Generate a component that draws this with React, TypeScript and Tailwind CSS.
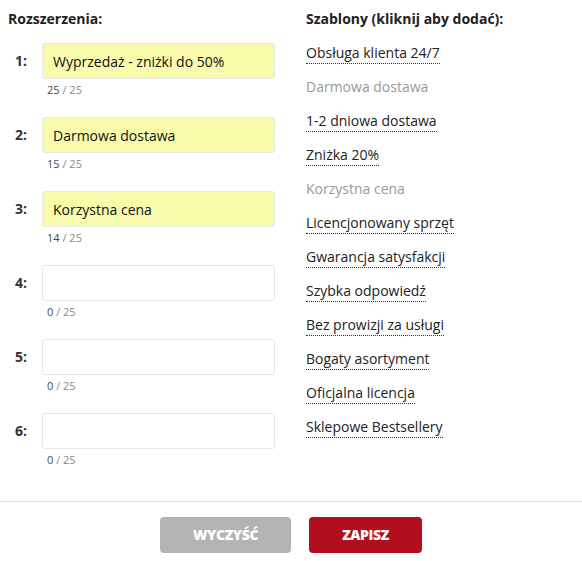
import { useState } from 'react';

const rows = [
  { value: 'Wyprzedaż - zniżki do 50%' },
  { value: 'Darmowa dostawa' },
  { value: 'Korzystna cena' },
  { value: '' },
  { value: '' },
  { value: '' },
];

const templates = [
  'Obsługa klienta 24/7',
  'Darmowa dostawa',
  '1-2 dniowa dostawa',
  'Zniżka 20%',
  'Korzystna cena',
  'Licencjonowany sprzęt',
  'Gwarancja satysfakcji',
  'Szybka odpowiedź',
  'Bez prowizji za usługi',
  'Bogaty asortyment',
  'Oficjalna licencja',
  'Sklepowe Bestsellery',
];

export default function App() {
  const [values, setValues] = useState(rows.map((r) => r.value));
  const used = values.filter(Boolean);

  return (
    <div className="w-[582px] h-[561px] bg-white text-[#222] font-['Open_Sans',sans-serif] text-[14px] leading-[20px]">
      <div className="flex pt-[9px] pb-[34px]">
        <div className="w-[298px] pl-[8px] flex flex-col">
          <div className="font-bold">Rozszerzenia:</div>
          <div className="mt-[14px] flex flex-col gap-[20px]">
            {values.map((v, i) => (
              <div key={i}>
                <div className="flex items-center">
                  <div className="w-[34px] pl-[7px] font-bold text-[#333]">{i + 1}:</div>
                  <input
                    value={v}
                    maxLength={25}
                    onChange={(e) =>
                      setValues((prev) => prev.map((p, j) => (j === i ? e.target.value : p)))
                    }
                    className={`w-[233px] h-[36px] px-[10px] rounded-[3px] border border-[#e6e6e6] outline-none text-[14px] text-[#111] ${
                      v ? 'bg-[#f8fbac]' : 'bg-white'
                    }`}
                  />
                </div>
                <div className="mt-[3px] pl-[39px] text-[11px] leading-[15px]">
                  <span className="text-[#4a4a4a]">{v.length}</span>
                  <span className="text-[#8a8a8a]"> / 25</span>
                </div>
              </div>
            ))}
          </div>
        </div>
        <div className="flex flex-col items-start gap-[13px] pl-[8px]">
          <div className="font-bold pb-px">Szablony (kliknij aby dodać):</div>
          {templates.map((t) => {
            const active = !used.includes(t);
            return (
              <span
                key={t}
                className={`border-b border-dotted ${
                  active ? 'border-[#333] text-[#222] cursor-pointer' : 'border-transparent text-[#999]'
                }`}
              >
                {t}
              </span>
            );
          })}
        </div>
      </div>
      <div className="border-t border-[#e0e0e0] flex justify-center gap-[18px] pt-[15px]">
        <button
          onClick={() => setValues(rows.map(() => ''))}
          className="w-[131px] h-[36px] rounded-[4px] bg-[#b3b3b3] text-white font-extrabold text-[14px] tracking-[-0.4px]"
        >
          WYCZYŚĆ
        </button>
        <button className="w-[113px] h-[36px] rounded-[4px] bg-[#b20e1f] text-white font-extrabold text-[14px] tracking-[-0.4px]">
          ZAPISZ
        </button>
      </div>
    </div>
  );
}
